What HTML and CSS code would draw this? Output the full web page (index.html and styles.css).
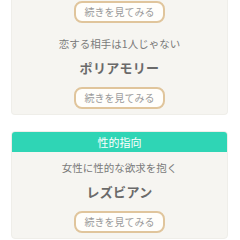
FILE: index.html
```html
<!DOCTYPE html>
<html lang="ja">

<head>
    <meta charset="UTF-8">
    <meta name="viewport" content="width=device-width, initial-scale=1.0">
    <title>タイプ一覧</title>
    <link rel="stylesheet" href="styles.css">
</head>

<body>
    <div class="list">
        <div class="card">
            <div class="item item-cut">
                <a class="more" href="#">続きを見てみる</a>
            </div>
            <div class="item">
                <p class="lead">恋する相手は1人じゃない</p>
                <h2 class="name">ポリアモリー</h2>
                <a class="more" href="#">続きを見てみる</a>
            </div>
        </div>

        <div class="card">
            <h3 class="card-head">性的指向</h3>
            <div class="item">
                <p class="lead">女性に性的な欲求を抱く</p>
                <h2 class="name">レズビアン</h2>
                <a class="more" href="#">続きを見てみる</a>
            </div>
        </div>
    </div>
</body>

</html>
```

FILE: styles.css
```css
* {
    margin: 0;
    padding: 0;
    box-sizing: border-box;
}

body {
    background: #fff;
    font-family: "Noto Sans CJK JP", "Noto Sans", sans-serif;
}

.list {
    padding: 0 12px 0 11px;
}

.card {
    background: #f6f5f1;
    border: 1px solid #efeee9;
    border-radius: 4px;
    margin-bottom: 16px;
    overflow: hidden;
}

.list .card:first-child {
    border-top: none;
    border-radius: 0 0 4px 4px;
}

.card-head {
    height: 20px;
    line-height: 20px;
    background: #2fd5b5;
    color: #fff;
    font-size: 11px;
    font-weight: normal;
    text-align: center;
}

.item {
    padding: 8px 0 5px;
    text-align: center;
}

/* 上の項目の続き（スクロールで切れている部分） */
.item-cut {
    padding-top: 1px;
}

.lead {
    font-size: 10.5px;
    line-height: 16px;
    color: #7a7a7a;
}

.name {
    margin-top: 6px;
    font-size: 13px;
    line-height: 20px;
    font-weight: bold;
    color: #6a6a6a;
    letter-spacing: 0.3px;
}

.more {
    display: block;
    width: 91px;
    height: 22px;
    margin: 9px auto 0;
    line-height: 18px;
    font-size: 10px;
    color: #9a9a9a;
    text-decoration: none;
    background: #fffefb;
    border: 2px solid #e0c59c;
    border-radius: 8px;
}

.item-cut .more {
    margin-top: 0;
}
```
